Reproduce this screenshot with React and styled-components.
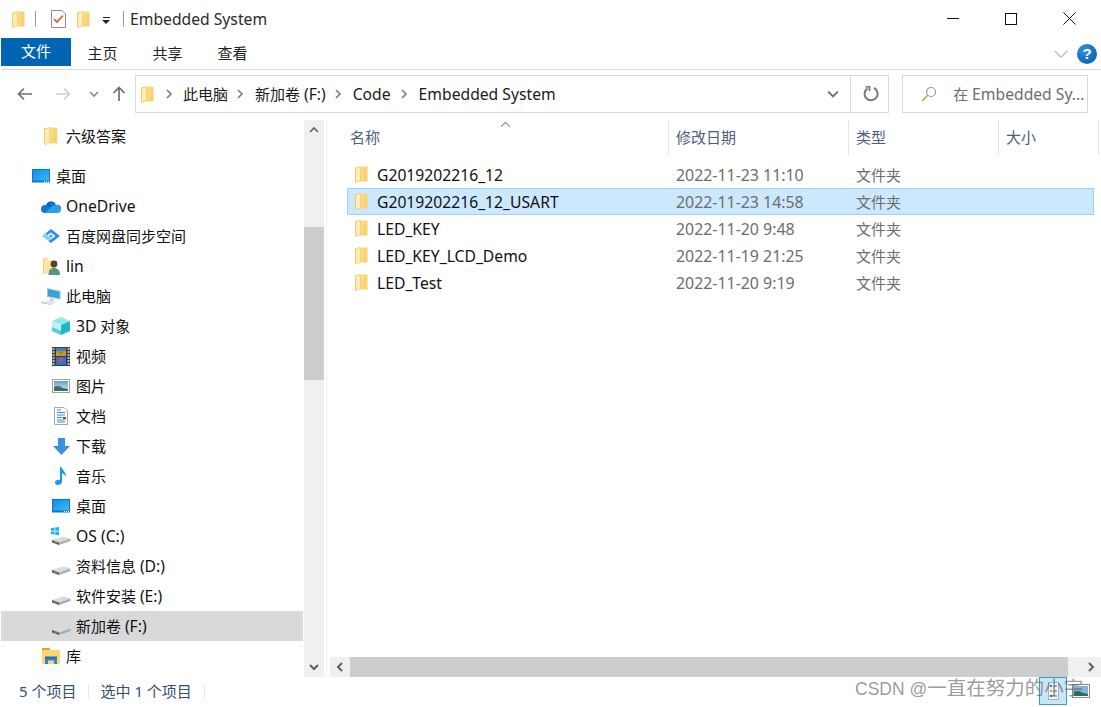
import React from "react";
import styled, { createGlobalStyle } from "styled-components";

const GlobalStyle = createGlobalStyle`
  html, body {
    margin: 0;
    padding: 0;
    background: #fff;
    overflow: hidden;
  }
  body {
    font-family: "Noto Sans", "Noto Sans CJK SC", sans-serif;
    font-size: 15px;
    line-height: 20px;
    color: #000;
  }
`;

/* ---------- icons ---------- */

const FolderIcon = ({ size = 17 }) => (
  <svg width={(size * 13) / 17} height={size} viewBox="0 0 13 17">
    <defs>
      <linearGradient id="folderFace" x1="0" y1="0" x2="1" y2="0.5">
        <stop offset="0" stopColor="#fbe08e" />
        <stop offset="1" stopColor="#f6d06a" />
      </linearGradient>
    </defs>
    <path d="M5 .5H12.500V15.500H5z" fill="url(#folderFace)" />
    <path d="M0 1.500 5.500 0V15.200L1 17 0 16z" fill="#f0c866" />
    <path d="M1 2 5 .9V14.800L1 16.300z" fill="#fdedb8" />
  </svg>
);

const CheckDocIcon = () => (
  <svg width="15" height="18" viewBox="0 0 15 18">
    <path d="M.5.5H11L14.500 4V17.500H.5z" fill="#fff" stroke="#8f8f8f" />
    <path d="M3 9 6 12 12 5.500" fill="none" stroke="#e2501f" strokeWidth="1.600" />
  </svg>
);

const Chevron = ({ dir = "right", color = "#7a7a7a", size = 10, width = 1.6 }) => {
  const d = {
    right: "M3 1 7 5 3 9",
    left: "M7 1 3 5 7 9",
    down: "M1 3 5 7 9 3",
    up: "M1 7 5 3 9 7",
  }[dir];
  return (
    <svg width={size} height={size} viewBox="0 0 10 10">
      <path d={d} fill="none" stroke={color} strokeWidth={width} />
    </svg>
  );
};

const NavArrow = ({ dir, color }) => {
  const d = {
    left: "M15 8H1.500M7 2.500 1.500 8 7 13.500",
    right: "M1 8H14.500M9 2.500 14.500 8 9 13.500",
    up: "M8 15V1.500M2.500 7 8 1.500 13.500 7",
  }[dir];
  return (
    <svg width="16" height="16" viewBox="0 0 16 16">
      <path d={d} fill="none" stroke={color} strokeWidth="1.700" />
    </svg>
  );
};

const DesktopIcon = () => (
  <svg width="18" height="14" viewBox="0 0 18 14">
    <defs>
      <linearGradient id="deskFace" x1="0" y1="0" x2="1" y2="1">
        <stop offset="0" stopColor="#0f8fe6" />
        <stop offset="1" stopColor="#3fb6fa" />
      </linearGradient>
    </defs>
    <rect width="18" height="13.500" fill="#0a78c2" />
    <rect x="1" y="1" width="16" height="10.500" fill="url(#deskFace)" />
    <path d="M12 12.500h1M14 12.500h1M16 12.500h1" stroke="#fff" />
  </svg>
);

const OneDriveIcon = () => (
  <svg width="20" height="13" viewBox="0 0 20 13">
    <path d="M5 5.500A5.200 5.200 0 0 1 14.600 4L10 8z" fill="#0a5fb4" />
    <path d="M8 3.500A5 5 0 0 1 15 5 3.600 3.600 0 0 1 20 9L12 7z" fill="#0f78d4" />
    <path d="M4 13A4 4 0 0 1 4 5c2 0 3 .5 4.500 2l2 1.500L8 13z" fill="#0f78d4" />
    <path d="M4 13 10 7c2-1.500 5-2.400 7-1.500 2 .8 3 2.400 3 4 0 1.800-1.500 3.500-3 3.500z" fill="#2aa0e8" />
  </svg>
);

const BaiduIcon = () => (
  <svg width="18" height="14" viewBox="0 0 18 14">
    <path d="M9 0 18 7 9 14 6.500 12 13.500 7 9 3.500 5.500 6 3.500 4.500z" fill="#2f8cf0" />
    <path d="M0 7 3.500 4.500 9 9 6.500 12z" fill="#79d4f7" />
    <path d="M9 5.500 11 7 9 8.500 7 7z" fill="#2f8cf0" />
  </svg>
);

const UserFolderIcon = () => (
  <svg width="17" height="18" viewBox="0 0 17 18">
    <path d="M0 1.500 4.500.5V16L1 17 0 16z" fill="#f2cb78" />
    <path d="M4 3.500H12V15.500H4z" fill="#fbe09a" />
    <path d="M1 2 4 1.200V15.600L1 16.400z" fill="#fde8a8" />
    <circle cx="11" cy="7" r="3.400" fill="#5a3f2c" />
    <path d="M5.500 18c0-5 2-7 5.500-7s6 2 6 7z" fill="#4d9b7c" />
  </svg>
);

const PcIcon = () => (
  <svg width="20" height="17" viewBox="0 0 20 17">
    <path d="M6 0 19.500 3V11.500L6 9z" fill="#8fc5e4" />
    <path d="M7 1.300 18.500 3.800V10.300L7 8z" fill="#3d9fe0" />
    <path d="M9 10.500 12.500 11V14L9 13z" fill="#c4c8cc" />
    <path d="M0 14 6 12.500 16 14.500 10 16.500z" fill="#e2e4e6" />
    <path d="M0 14 10 16.500 10 17 0 15z" fill="#aeb2b6" />
  </svg>
);

const CubeIcon = () => (
  <svg width="18" height="18" viewBox="0 0 18 18">
    <path d="M9 0 18 4 9 8 0 4z" fill="#8eeaea" />
    <path d="M0 4 9 8V18L0 14z" fill="#bdf0f0" />
    <path d="M18 4 9 8V18L18 14z" fill="#1fb6cc" />
    <path d="M0 10 9 14V18L0 14z" fill="#55cfdd" />
  </svg>
);

const VideoIcon = () => (
  <svg width="18" height="19" viewBox="0 0 18 19">
    <rect width="18" height="19" fill="#3a3a3a" />
    <path d="M1.500 1v17M16.500 1v17" stroke="#b8b8b8" strokeWidth="2" strokeDasharray="2 1" />
    <rect x="4" y="1" width="10" height="8" fill="#d8902c" />
    <rect x="4" y="1" width="10" height="3" fill="#3c7dd0" />
    <circle cx="9" cy="5" r="2" fill="#5aa03c" />
    <rect x="4" y="10" width="10" height="8" fill="#2f6fd0" />
    <circle cx="9" cy="13" r="2" fill="#d8502c" />
  </svg>
);

const PictureIcon = () => (
  <svg width="18" height="14" viewBox="0 0 18 14">
    <defs>
      <linearGradient id="picSky" x1="0" y1="0" x2="0" y2="1">
        <stop offset="0" stopColor="#5f9fd0" />
        <stop offset="1" stopColor="#dbe9ef" />
      </linearGradient>
    </defs>
    <rect x=".5" y=".5" width="17" height="13" fill="#fff" stroke="#a0a0a0" />
    <rect x="2" y="2" width="14" height="10" fill="url(#picSky)" />
    <path d="M2 8c3-2 6-1 9 1l5 1v2H2z" fill="#3f6f66" />
  </svg>
);

const DocIcon = () => (
  <svg width="14" height="18" viewBox="0 0 14 18">
    <path d="M.5.5H10L13.500 4V17.500H.5z" fill="#fff" stroke="#a6a6a6" />
    <path d="M3 3h4M3 5.500h8M3 8h8M3 10.500h5M3 13h8M3 15h8" stroke="#2f8fd8" />
    <path d="M9 10h3v2H9z" fill="#555" />
  </svg>
);

const DownloadIcon = () => (
  <svg width="17" height="17" viewBox="0 0 17 17">
    <path d="M5 0H12V8H17L8.500 17 0 8H5z" fill="#3d8fdf" />
  </svg>
);

const MusicIcon = () => (
  <svg width="12" height="18" viewBox="0 0 12 18">
    <path d="M5 0H6.500C7 3 11.500 5 11 10 10.500 8 8.500 6.500 7 6.300V14.500C7 16.500 5 18 3 18 1 18 0 16.800 0 15.500 0 13.500 2.500 12.300 5 13z" fill="#1a9ae8" />
  </svg>
);

const DriveIcon = ({ windows }) => (
  <svg width="20" height="18" viewBox="0 0 20 18">
    <path d="M1 13 12.500 9.500 19.500 11.500 8 15.500z" fill="#d8dadb" />
    <path d="M1 13 8 15.500V18L1 15.500z" fill="#55595b" />
    <path d="M8 15.500 19.500 11.500V14L8 18z" fill="#a8acae" />
    <path d="M3 14.300 6 15.400V16.400L3 15.300z" fill="#58b858" />
    {windows && (
      <path d="M0 1.200 3.500.6V3.800H0zM4.200.5 8 0V3.800H4.200zM0 4.500H3.500V7.700L0 7.100zM4.200 4.500H8V8.300L4.200 7.800z" fill="#18b4ee" />
    )}
  </svg>
);

const LibraryIcon = () => (
  <svg width="18" height="16" viewBox="0 0 18 16">
    <path d="M0 0H7L9 2H0z" fill="#e0a418" />
    <rect y="2" width="18" height="14" fill="#fcd673" />
    <path d="M3 16V10H15V16H12V12.500H6V16z" fill="#2a87d8" />
    <rect x="3" y="8.500" width="12" height="2" fill="#1f6fb8" />
  </svg>
);

const SearchIcon = () => (
  <svg width="16" height="16" viewBox="0 0 16 16">
    <circle cx="10" cy="6" r="4.500" fill="none" stroke="#9a9a9a" strokeWidth="1.200" />
    <path d="M6.500 9.500 1 15" stroke="#c08a4a" strokeWidth="1.200" />
  </svg>
);

const RefreshIcon = () => (
  <svg width="16" height="16" viewBox="0 0 16 16">
    <path d="M4.500 2.400A6.500 6.500 0 1 0 11 2" fill="none" stroke="#7b7b7b" strokeWidth="2" />
    <path d="M2.500 0.500 6.500 0.500 6.500 5" fill="none" stroke="#7b7b7b" strokeWidth="1.800" />
  </svg>
);

const DetailViewIcon = () => (
  <svg width="11" height="18" viewBox="0 0 11 18">
    <rect x=".5" y=".5" width="10" height="17" fill="#eef4f8" stroke="#9fb4c2" />
    <path d="M2 4h2" stroke="#2a7fc4" strokeWidth="2" />
    <path d="M5 4h4M5 9h4M5 14h4" stroke="#666" />
    <path d="M2 9h2" stroke="#c9a23a" strokeWidth="2" />
    <path d="M2 14h2" stroke="#c04a2a" strokeWidth="2" />
  </svg>
);

const LargeViewIcon = () => (
  <svg width="18" height="14" viewBox="0 0 18 14">
    <rect x=".5" y=".5" width="17" height="13" fill="#fff" stroke="#8c8c8c" />
    <rect x="2" y="2" width="14" height="10" fill="#7fb4d4" />
    <path d="M2 8c3-2 6-1 9 1l5 1v2H2z" fill="#2f6a5a" />
  </svg>
);

/* ---------- layout ---------- */

const Window = styled.div`
  position: relative;
  width: 1101px;
  height: 707px;
  display: flex;
  flex-direction: column;
  background: #fff;
  overflow: hidden;
`;

// latin runs are set a bit larger than the CJK ones, as in Segoe next to YaHei
const Lat = styled.span`
  font-size: 15.700px;
`;

const TitleBar = styled.div`
  height: 38px;
  display: flex;
  align-items: center;
  padding-left: 12px;
`;

const QuickSlot = styled.div`
  display: flex;
  align-items: center;
  justify-content: center;
  margin-left: ${(p) => p.$left || 0}px;
`;

const TitleSep = styled.div`
  width: 1px;
  height: 16px;
  background: #9a9a9a;
  margin-left: ${(p) => p.$left}px;
`;

const DropCaret = styled.div`
  margin-left: 12px;
  width: 8px;
  display: flex;
  flex-direction: column;
  align-items: center;
  gap: 2px;
  padding-top: 3px;
  &::before {
    content: "";
    width: 7px;
    height: 1px;
    background: #222;
  }
  &::after {
    content: "";
    border-left: 4px solid transparent;
    border-right: 4px solid transparent;
    border-top: 4px solid #222;
  }
`;

const TitleText = styled.div`
  margin-left: 6px;
  color: #2b2b2b;
  font-size: 15.700px;
  white-space: nowrap;
`;

const WinControls = styled.div`
  margin-left: auto;
  padding-right: 3px;
  align-self: stretch;
  display: flex;
`;

const WinButton = styled.div`
  width: 58px;
  display: flex;
  align-items: center;
  justify-content: center;
  padding-bottom: 1px;
`;

const RibbonTabs = styled.div`
  height: 31px;
  margin-left: 1px;
  display: flex;
  align-items: flex-start;
  border-bottom: 1px solid #d9d9d9;
`;

const FileTab = styled.div`
  width: 70px;
  height: 28px;
  background: #0066b4;
  color: #fff;
  display: flex;
  align-items: center;
  justify-content: center;
  padding-bottom: 2px;
  box-sizing: border-box;
`;

const Tab = styled.div`
  width: 65px;
  height: 31px;
  box-sizing: border-box;
  padding: 0 2px 1px 0;
  display: flex;
  align-items: center;
  justify-content: center;
  color: #222;
`;

const RibbonRight = styled.div`
  margin-left: auto;
  height: 31px;
  padding-right: 4px;
  display: flex;
  align-items: center;
  gap: 8px;
`;

const HelpBadge = styled.div`
  width: 20px;
  height: 20px;
  border-radius: 50%;
  background: radial-gradient(circle at 35% 30%, #2f8fe0, #0058a8);
  color: #fff;
  font-family: "Liberation Sans", sans-serif;
  font-weight: 700;
  font-size: 15px;
  display: flex;
  align-items: center;
  justify-content: center;
`;

const AddressRow = styled.div`
  height: 50px;
  box-sizing: border-box;
  padding: 5px 13px 7px 0;
  display: flex;
  align-items: stretch;
`;

const NavButtons = styled.div`
  width: 135px;
  flex-shrink: 0;
  display: flex;
  padding-left: 17px;
  box-sizing: border-box;
  align-items: center;
`;

const NavSlot = styled.div`
  display: flex;
  margin-left: ${(p) => p.$left || 0}px;
`;

const AddressBox = styled.div`
  width: 755px;
  box-sizing: border-box;
  border: 1px solid #d9d9d9;
  display: flex;
  align-items: center;
  padding-left: 5px;
`;

const Crumb = styled.span`
  margin-left: ${(p) => p.$left || 0}px;
  color: #1a1a1a;
  white-space: nowrap;
`;

const CrumbSep = styled.span`
  display: inline-flex;
  margin-left: ${(p) => p.$left}px;
`;

const AddressEnd = styled.div`
  margin-left: auto;
  align-self: stretch;
  display: flex;
  align-items: center;
`;

const DropButton = styled.div`
  width: 34px;
  display: flex;
  justify-content: center;
`;

const RefreshButton = styled.div`
  width: 38px;
  align-self: stretch;
  box-sizing: border-box;
  padding-left: 2px;
  border-left: 1px solid #d9d9d9;
  display: flex;
  align-items: center;
  justify-content: center;
`;

const SearchBox = styled.div`
  width: 186px;
  margin-left: 13px;
  box-sizing: border-box;
  border: 1px solid #d9d9d9;
  display: flex;
  align-items: center;
  padding-left: 18px;
  gap: 16px;
  color: #6d6d6d;
  white-space: nowrap;
  overflow: hidden;
`;

const Main = styled.div`
  height: 557px;
  display: flex;
`;

const Sidebar = styled.div`
  width: 324px;
  flex-shrink: 0;
  padding-left: 1px;
  box-sizing: border-box;
  display: flex;
`;

const NavList = styled.div`
  width: 302px;
  padding-top: 1px;
  display: flex;
  flex-direction: column;
`;

const NavRow = styled.div`
  height: 30px;
  flex-shrink: 0;
  box-sizing: border-box;
  display: flex;
  align-items: center;
  gap: 5px;
  padding-left: ${(p) => 30 + p.$depth * 10}px;
  margin-bottom: ${(p) => (p.$spaced ? 10 : 0)}px;
  background: ${(p) => (p.$active ? "#d9d9d9" : "transparent")};
  color: #111;
  white-space: nowrap;
`;

const IconSlot = styled.span`
  width: 20px;
  height: 20px;
  flex-shrink: 0;
  display: flex;
  align-items: center;
  justify-content: center;
`;

const VScroll = styled.div`
  width: 20px;
  margin-left: 1px;
  background: #f0f0f0;
  display: flex;
  flex-direction: column;
`;

const ScrollArrow = styled.div`
  width: 20px;
  height: 20px;
  flex-shrink: 0;
  display: flex;
  align-items: center;
  justify-content: center;
`;

const VTrack = styled.div`
  flex: 1;
  padding-top: 87px;
`;

const VThumb = styled.div`
  height: 153px;
  background: #cdcdcd;
`;

const Splitter = styled.div`
  width: 1px;
  margin-left: 2px;
  background: #f2f2f2;
  flex-shrink: 0;
`;

const Files = styled.div`
  flex: 1;
  position: relative;
  padding-left: 3px;
  display: flex;
  flex-direction: column;
`;

const HeaderRow = styled.div`
  height: 35px;
  flex-shrink: 0;
  display: grid;
  grid-template-columns: 339px 180px 150px 100px;
`;

const HeaderCell = styled.div`
  position: relative;
  box-sizing: border-box;
  padding-left: ${(p) => p.$pad || 7}px;
  padding-bottom: 1px;
  display: flex;
  align-items: center;
  color: #4c607a;
  border-right: 1px solid #e5e5e5;
  white-space: nowrap;
`;

const SortCaret = styled.span`
  position: absolute;
  top: -1px;
  left: 170px;
  display: flex;
`;

const FileList = styled.div`
  flex: 1;
  padding: 6px 0 0 17px;
`;

const FileRow = styled.div`
  width: 747px;
  height: 27px;
  box-sizing: border-box;
  display: grid;
  grid-template-columns: 320px 180px 150px;
  align-items: center;
  border: 1px solid ${(p) => (p.$selected ? "#99d1ff" : "transparent")};
  background: ${(p) => (p.$selected ? "#cce8ff" : "transparent")};
`;

const NameCell = styled.div`
  display: flex;
  align-items: center;
  gap: 9px;
  padding-left: 7px;
  color: #111;
  font-size: 15.700px;
  white-space: nowrap;
`;

const MetaCell = styled.div`
  padding-left: 8px;
  color: #6d6d6d;
  white-space: nowrap;
`;

const DateText = styled.span`
  font-size: 15.900px;
`;

const HScroll = styled.div`
  height: 20px;
  flex-shrink: 0;
  background: #f0f0f0;
  display: flex;
`;

const HThumb = styled.div`
  width: 718px;
  background: #cdcdcd;
`;

const HSpacer = styled.div`
  flex: 1;
  display: flex;
  justify-content: flex-end;
`;

const StatusBar = styled.div`
  flex: 1;
  display: flex;
  align-items: center;
  color: #33506e;
  padding-left: 19px;
  padding-bottom: 2px;
`;

const StatusItem = styled.span`
  white-space: nowrap;
`;

const StatusSep = styled.span`
  width: 1px;
  height: 15px;
  background: #e8e8e8;
  margin: 0 ${(p) => p.$right}px 0 ${(p) => p.$left}px;
`;

const ViewToggles = styled.div`
  margin-left: auto;
  margin-right: 6px;
  display: flex;
  align-items: center;
  align-self: flex-start;
`;

const ViewButton = styled.div`
  width: 28px;
  height: 28px;
  box-sizing: border-box;
  display: flex;
  align-items: center;
  justify-content: center;
  border: 1px solid ${(p) => (p.$active ? "#2a9fd8" : "transparent")};
  background: ${(p) => (p.$active ? "#c9e6f7" : "transparent")};
`;

const Watermark = styled.div`
  position: absolute;
  left: 855px;
  top: 678px;
  font-family: "Liberation Sans", "Noto Sans CJK SC", sans-serif;
  font-size: 17.500px;
  color: rgba(90, 90, 90, 0.62);
  white-space: nowrap;
`;

const WatermarkCjk = styled.span`
  font-size: 19.500px;
`;

/* ---------- data ---------- */

const navItems = [
  { label: "六级答案", depth: 1, icon: <FolderIcon size={18} />, spaced: true },
  { label: "桌面", depth: 0, icon: <DesktopIcon /> },
  { label: <Lat>OneDrive</Lat>, depth: 1, icon: <OneDriveIcon /> },
  { label: "百度网盘同步空间", depth: 1, icon: <BaiduIcon /> },
  { label: <Lat>lin</Lat>, depth: 1, icon: <UserFolderIcon /> },
  { label: "此电脑", depth: 1, icon: <PcIcon /> },
  { label: <><Lat>3D</Lat> 对象</>, depth: 2, icon: <CubeIcon /> },
  { label: "视频", depth: 2, icon: <VideoIcon /> },
  { label: "图片", depth: 2, icon: <PictureIcon /> },
  { label: "文档", depth: 2, icon: <DocIcon /> },
  { label: "下载", depth: 2, icon: <DownloadIcon /> },
  { label: "音乐", depth: 2, icon: <MusicIcon /> },
  { label: "桌面", depth: 2, icon: <DesktopIcon /> },
  { label: <Lat>OS (C:)</Lat>, depth: 2, icon: <DriveIcon windows /> },
  { label: <>资料信息 <Lat>(D:)</Lat></>, depth: 2, icon: <DriveIcon /> },
  { label: <>软件安装 <Lat>(E:)</Lat></>, depth: 2, icon: <DriveIcon /> },
  { label: <>新加卷 <Lat>(F:)</Lat></>, depth: 2, icon: <DriveIcon />, active: true },
  { label: "库", depth: 1, icon: <LibraryIcon /> },
];

const files = [
  { name: "G2019202216_12", date: "2022-11-23 11:10" },
  { name: "G2019202216_12_USART", date: "2022-11-23 14:58", selected: true },
  { name: "LED_KEY", date: "2022-11-20 9:48" },
  { name: "LED_KEY_LCD_Demo", date: "2022-11-19 21:25" },
  { name: "LED_Test", date: "2022-11-20 9:19" },
];

export default function App() {
  return (
    <Window>
      <GlobalStyle />
      <TitleBar>
        <QuickSlot><FolderIcon /></QuickSlot>
        <TitleSep $left={10} />
        <QuickSlot $left={15}><CheckDocIcon /></QuickSlot>
        <QuickSlot $left={11}><FolderIcon /></QuickSlot>
        <DropCaret />
        <TitleSep $left={13} />
        <TitleText>Embedded System</TitleText>
        <WinControls>
          <WinButton>
            <svg width="12" height="12" viewBox="0 0 12 12"><path d="M0 5.500H12" stroke="#111" /></svg>
          </WinButton>
          <WinButton>
            <svg width="12" height="12" viewBox="0 0 12 12"><rect x=".5" y=".5" width="11" height="11" fill="none" stroke="#111" /></svg>
          </WinButton>
          <WinButton>
            <svg width="13" height="13" viewBox="0 0 13 13"><path d="M.5.5 12.500 12.500M12.500.5.5 12.500" stroke="#111" /></svg>
          </WinButton>
        </WinControls>
      </TitleBar>

      <RibbonTabs>
        <FileTab>文件</FileTab>
        <Tab>主页</Tab>
        <Tab>共享</Tab>
        <Tab>查看</Tab>
        <RibbonRight>
          <Chevron dir="down" color="#b5b5b5" size={16} width={0.7} />
          <HelpBadge>?</HelpBadge>
        </RibbonRight>
      </RibbonTabs>

      <AddressRow>
        <NavButtons>
          <NavSlot><NavArrow dir="left" color="#6f6f6f" /></NavSlot>
          <NavSlot $left={22}><NavArrow dir="right" color="#cfcfcf" /></NavSlot>
          <NavSlot $left={18}><Chevron dir="down" color="#8a8a8a" /></NavSlot>
          <NavSlot $left={12}><NavArrow dir="up" color="#6f6f6f" /></NavSlot>
        </NavButtons>
        <AddressBox>
          <FolderIcon />
          <CrumbSep $left={10}><Chevron /></CrumbSep>
          <Crumb $left={9}>此电脑</Crumb>
          <CrumbSep $left={7}><Chevron /></CrumbSep>
          <Crumb $left={10}>新加卷 <Lat>(F:)</Lat></Crumb>
          <CrumbSep $left={7}><Chevron /></CrumbSep>
          <Crumb $left={10}><Lat>Code</Lat></Crumb>
          <CrumbSep $left={8}><Chevron /></CrumbSep>
          <Crumb $left={10}><Lat>Embedded System</Lat></Crumb>
          <AddressEnd>
            <DropButton><Chevron dir="down" color="#6f6f6f" size={12} /></DropButton>
            <RefreshButton><RefreshIcon /></RefreshButton>
          </AddressEnd>
        </AddressBox>
        <SearchBox>
          <SearchIcon />
          <span>在 <Lat>Embedded Sy...</Lat></span>
        </SearchBox>
      </AddressRow>

      <Main>
        <Sidebar>
          <NavList>
            {navItems.map((item, i) => (
              <NavRow key={i} $depth={item.depth} $spaced={item.spaced} $active={item.active}>
                <IconSlot>{item.icon}</IconSlot>
                <span>{item.label}</span>
              </NavRow>
            ))}
          </NavList>
          <VScroll>
            <ScrollArrow><Chevron dir="up" color="#606060" /></ScrollArrow>
            <VTrack><VThumb /></VTrack>
            <ScrollArrow><Chevron dir="down" color="#606060" width={2} /></ScrollArrow>
          </VScroll>
        </Sidebar>
        <Splitter />
        <Files>
          <HeaderRow>
            <HeaderCell $pad={20}>
              名称
              <SortCaret><Chevron dir="up" color="#8a8a8a" size={11} width={1} /></SortCaret>
            </HeaderCell>
            <HeaderCell>修改日期</HeaderCell>
            <HeaderCell>类型</HeaderCell>
            <HeaderCell>大小</HeaderCell>
          </HeaderRow>
          <FileList>
            {files.map((f) => (
              <FileRow key={f.name} $selected={f.selected}>
                <NameCell><FolderIcon />{f.name}</NameCell>
                <MetaCell><DateText>{f.date}</DateText></MetaCell>
                <MetaCell>文件夹</MetaCell>
              </FileRow>
            ))}
          </FileList>
          <HScroll>
            <ScrollArrow><Chevron dir="left" color="#606060" width={2} /></ScrollArrow>
            <HThumb />
            <HSpacer>
              <ScrollArrow><Chevron dir="right" color="#606060" width={2} /></ScrollArrow>
            </HSpacer>
          </HScroll>
        </Files>
      </Main>

      <StatusBar>
        <StatusItem>5 个项目</StatusItem>
        <StatusSep $left={12} $right={11} />
        <StatusItem>选中 1 个项目</StatusItem>
        <StatusSep $left={12} $right={0} />
        <ViewToggles>
          <ViewButton $active><DetailViewIcon /></ViewButton>
          <ViewButton><LargeViewIcon /></ViewButton>
        </ViewToggles>
      </StatusBar>

      <Watermark>CSDN @<WatermarkCjk>一直在努力的小宇</WatermarkCjk></Watermark>
    </Window>
  );
}
